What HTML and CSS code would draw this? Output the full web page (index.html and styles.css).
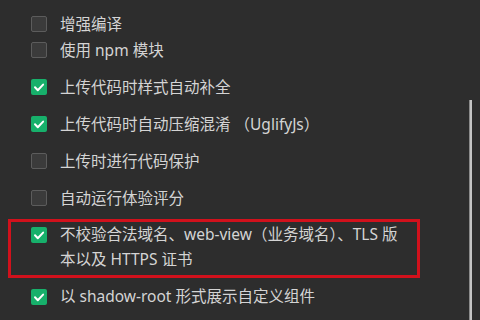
FILE: index.html
```html
<!DOCTYPE html>
<html lang="zh-CN">
<head>
  <meta charset="UTF-8" />
  <meta name="viewport" content="width=device-width, initial-scale=1.0" />
  <title>本地设置</title>
  <link rel="stylesheet" href="styles.css">
</head>
<body>
  <div class="panel">
    <div class="options">
      <div class="group compact">
        <label class="option"><span class="box"></span><span class="label">增强编译</span></label>
        <label class="option"><span class="box"></span><span class="label">使用 npm 模块</span></label>
      </div>

      <label class="option"><span class="box checked"><svg viewBox="0 0 16 16"><path d="M4 8.3l2.8 2.9 5.3-5.6"/></svg></span><span class="label">上传代码时样式自动补全</span></label>
      <label class="option"><span class="box checked"><svg viewBox="0 0 16 16"><path d="M4 8.3l2.8 2.9 5.3-5.6"/></svg></span><span class="label">上传代码时自动压缩混淆 （UglifyJs）</span></label>
      <label class="option"><span class="box"></span><span class="label">上传时进行代码保护</span></label>
      <label class="option"><span class="box"></span><span class="label">自动运行体验评分</span></label>

      <!-- highlighted in the screenshot -->
      <div class="mark">
        <label class="option"><span class="box checked"><svg viewBox="0 0 16 16"><path d="M4 8.3l2.8 2.9 5.3-5.6"/></svg></span><span class="label">不校验合法域名、web-view（业务域名）、TLS 版本以及 HTTPS 证书</span></label>
      </div>

      <label class="option"><span class="box checked"><svg viewBox="0 0 16 16"><path d="M4 8.3l2.8 2.9 5.3-5.6"/></svg></span><span class="label">以 shadow-root 形式展示自定义组件</span></label>
    </div>
    <div class="scrollbar"><div class="thumb"></div></div>
  </div>
</body>
</html>
```

FILE: styles.css
```css
html, body {
  height: 100%;
}
body {
  margin: 0;
  background: #2d2d2d;
  color: #d4d4d4;
  font-family: "Noto Sans", "Noto Sans CJK SC", sans-serif;
  font-size: 15.5px;
  overflow: hidden;
}
.panel {
  display: flex;
  height: 100%;
}
.options {
  width: 381px;
  padding: 11.5px 0 0 31px;
  display: flex;
  flex-direction: column;
  gap: 12px;
}
.group.compact {
  display: flex;
  flex-direction: column;
  gap: 1px;
}
.option {
  display: flex;
  align-items: flex-start;
  gap: 13px;
  line-height: 25px;
}
.box {
  flex: none;
  width: 14px;
  height: 14px;
  margin-top: 4.5px;
  border: 1px solid #5c5c5c;
  border-radius: 2px;
  background: #3b3b3b;
}
.box.checked {
  width: 16px;
  height: 16px;
  border: none;
  background: #17b06b;
}
.box svg {
  display: block;
  width: 16px;
  height: 16px;
  fill: none;
  stroke: #fff;
  stroke-width: 2;
  stroke-linecap: round;
  stroke-linejoin: round;
}
.mark {
  margin: -3.5px -8px -6px -23px;
  padding: 0 5px 3px 20px;
  border: 3px solid #d1111c;
}
.scrollbar {
  margin-left: auto;
  margin-right: 8px;
  width: 3px;
}
.thumb {
  margin-top: 100px;
  height: 220px;
  background: #c4c4c4;
  border-left: 1px solid #8a8a8a;
  box-sizing: border-box;
}
```
